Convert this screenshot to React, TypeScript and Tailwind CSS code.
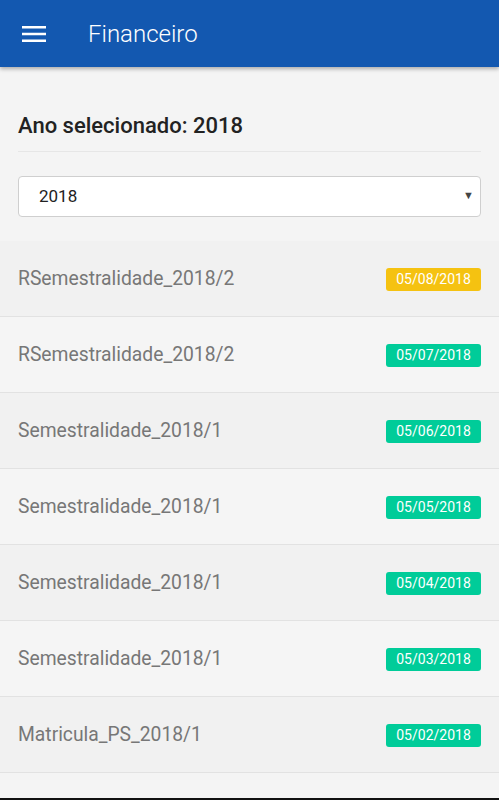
const payments = [
  { name: 'RSemestralidade_2018/2', date: '05/08/2018', pending: true },
  { name: 'RSemestralidade_2018/2', date: '05/07/2018', pending: false },
  { name: 'Semestralidade_2018/1', date: '05/06/2018', pending: false },
  { name: 'Semestralidade_2018/1', date: '05/05/2018', pending: false },
  { name: 'Semestralidade_2018/1', date: '05/04/2018', pending: false },
  { name: 'Semestralidade_2018/1', date: '05/03/2018', pending: false },
  { name: 'Matricula_PS_2018/1', date: '05/02/2018', pending: false },
];

export default function App() {
  return (
    <div className="flex h-[800px] flex-col overflow-hidden bg-[#f4f4f4] font-['Roboto',sans-serif]">
      {/* topo */}
      <header className="relative z-10 flex h-[67px] shrink-0 items-center bg-[#1358b0] px-[22px] shadow-[0_2px_4px_rgba(0,0,0,0.3)]">
        <svg width="24" height="18" viewBox="0 0 24 18" className="text-white">
          <rect x="0" y="1" width="24" height="2.5" fill="currentColor" />
          <rect x="0" y="7.75" width="24" height="2.5" fill="currentColor" />
          <rect x="0" y="14.5" width="24" height="2.5" fill="currentColor" />
        </svg>
        <h1 className="ml-[42px] text-[24px] font-light text-white">Financeiro</h1>
      </header>

      <div className="flex-1">
        <div className="px-[18px] pt-[42px]">
          <h2 className="border-b border-[#e6e6e6] pb-[9px] text-[22px] font-medium text-[#222]">
            Ano selecionado: 2018
          </h2>
          <div className="mt-[24px] flex h-[41px] items-center justify-between rounded-[4px] border border-[#cfcfcf] bg-white pl-[20px] pr-[6px]">
            <span className="text-[17px] text-[#222]">2018</span>
            <span className="text-[11px] text-[#444]">▼</span>
          </div>
        </div>

        <ul className="mt-[24px]">
          {payments.map((p, i) => (
            <li
              key={i}
              className={`flex h-[76px] items-center justify-between border-b border-[#e2e2e2] px-[18px] pt-[2px] ${
                i % 2 === 0 ? 'bg-[#f1f1f1]' : 'bg-[#f5f5f5]'
              }`}
            >
              <span className="text-[19.3px] text-[#777]">{p.name}</span>
              <span
                className={`flex h-[23px] w-[95px] items-center justify-center rounded-[3px] text-[14px] text-white ${
                  p.pending ? 'bg-[#f5c211]' : 'bg-[#00cc99]'
                }`}
              >
                {p.date}
              </span>
            </li>
          ))}
        </ul>
      </div>
      <div className="h-[2px] shrink-0 bg-[#111]" />
    </div>
  );
}
